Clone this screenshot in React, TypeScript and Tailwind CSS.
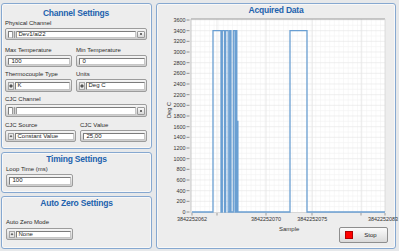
import React from 'react';

const font = { fontFamily: '"Liberation Sans", Arial, sans-serif' };

const Panel: React.FC<{ title: string; className?: string; children?: React.ReactNode }> = ({ title, className, children }) => (
  <div className={`rounded-[3px] border border-[#86a8d0] bg-[#ededed] shadow-[inset_0_0_0_1px_#f8f8f8] ${className || ''}`}>
    <div className="h-[13px] text-center text-[8.5px] font-bold leading-[13px] tracking-[-0.2px] text-[#2262ad]">{title}</div>
    {children}
  </div>
);

const Label: React.FC<{ text: string }> = ({ text }) => (
  <div className="h-[7px] whitespace-nowrap text-[6px] leading-[7px] text-[#2a2a2a]">{text}</div>
);

const Frame: React.FC<{ className?: string; children?: React.ReactNode }> = ({ className, children }) => (
  <div className={`flex rounded-[2px] border border-[#9c9c9c] bg-gradient-to-b from-[#f6f6f6] to-[#cdcdcd] p-[1.5px] ${className || ''}`}>
    {children}
  </div>
);

const TextField: React.FC<{ value: string; h?: string }> = ({ value, h = 'h-[12px]' }) => (
  <Frame className={h}>
    <div className="flex flex-1 items-center border border-[#c6c6c6] border-l-[#7c7c7c] border-t-[#7c7c7c] bg-white pl-[3px] text-[6px] text-[#222]">
      {value}
    </div>
  </Frame>
);

const Spinner: React.FC = () => (
  <div className="mr-[1px] flex w-[6px] flex-col justify-between border border-[#a4a4a4] bg-[#e8e8e8] py-[1px]">
    <svg viewBox="0 0 6 3" className="h-[3px] w-[4px] self-center">
      <path d="M0 3 L3 0 L6 3 Z" fill="#555" />
    </svg>
    <svg viewBox="0 0 6 3" className="h-[3px] w-[4px] self-center">
      <path d="M0 0 L3 3 L6 0 Z" fill="#555" />
    </svg>
  </div>
);

const RingField: React.FC<{ value: string; h?: string }> = ({ value, h = 'h-[13px]' }) => (
  <Frame className={h}>
    <Spinner />
    <div className="flex flex-1 items-center border border-[#c6c6c6] border-l-[#7c7c7c] border-t-[#7c7c7c] bg-white pl-[2px] text-[6px] text-[#222]">
      {value}
    </div>
  </Frame>
);

const IOField: React.FC<{ value: string; h?: string }> = ({ value, h = 'h-[12px]' }) => (
  <Frame className={h}>
    <div className="flex flex-1 items-center border border-[#c6c6c6] border-l-[#7c7c7c] border-t-[#7c7c7c] bg-white pl-[3px] text-[6px] text-[#222]">
      <div className="mr-[2px] h-[7px] w-[5px] bg-[repeating-linear-gradient(90deg,#9a9a9a_0px,#9a9a9a_1px,#d4d4d4_1px,#d4d4d4_2px)]" />
      {value}
    </div>
    <div className="ml-[1px] flex w-[8px] items-center justify-center rounded-[1px] border border-[#9a9a9a] bg-gradient-to-b from-[#fafafa] to-[#d8d8d8]">
      <div className="h-[2px] w-[2px] rounded-full bg-[#444]" />
    </div>
  </Frame>
);

// chart coordinates are page pixels
const PL = 192;
const PR = 386;
const PT = 19;
const PB = 212;
const yOf = (v: number) => PB - (v * 192) / 3600;
const xOf = (s: number) => 193 + (s - 62) * 9.25;

const hi = yOf(3400).toFixed(2);
const dataPath =
  `M193,${PB} H214 V${hi} H222 V${PB} H223.3 V${hi} H225.5 V${PB} H226.7 V${hi} H229.2 V${PB} H230.7 V${hi} H232 V${PB} H234.3 V${hi} H236 V${PB} H237.2 V${hi} H237.8 V${PB} H238.3 V${yOf(1700)} H238.9 V${PB} H291 V${hi} H308 V${PB} H${PR}`;

const Chart: React.FC = () => {
  const yTicks = Array.from({ length: 19 }, (_, i) => i * 200);
  const minorY = Array.from({ length: 36 }, (_, i) => i * 100 + 100);
  const minorX: number[] = [];
  for (let x = PL + 4.6; x < PR; x += 4.625) minorX.push(x);
  const xLabels = [62, 70, 75, 83];
  return (
    <svg width={238} height={209} viewBox="158 17 238 209" className="block overflow-visible">
      <rect x={PL} y={PT} width={PR - PL} height={PB - PT} fill="#ffffff" />
      {minorX.map((x, i) => (
        <line key={'mx' + i} x1={x} x2={x} y1={PT} y2={PB} stroke="#f1f1f1" strokeWidth={0.6} />
      ))}
      {minorY.map((v) => (
        <line key={'my' + v} x1={PL} x2={PR} y1={yOf(v)} y2={yOf(v)} stroke={v % 200 === 0 ? '#e6e6e6' : '#f2f2f2'} strokeWidth={0.6} />
      ))}
      {[xOf(64.7), xOf(70), xOf(75), xOf(80.3)].map((x, i) => (
        <line key={'gx' + i} x1={x} x2={x} y1={PT} y2={PB} stroke="#e4e4e4" strokeWidth={0.8} />
      ))}
      <line x1={PL} x2={PR} y1={PT} y2={PT} stroke="#9c9c9c" strokeWidth={1.2} />
      <line x1={PR} x2={PR} y1={PT} y2={PB} stroke="#d6d6d6" strokeWidth={0.8} />
      <line x1={PL} x2={PL} y1={PT} y2={PB + 1} stroke="#bdbdbd" strokeWidth={0.8} />
      <line x1={PL} x2={PR} y1={PB + 0.5} y2={PB + 0.5} stroke="#d0d0d0" strokeWidth={0.8} />
      <path d={dataPath} fill="none" stroke="#6a9fd2" strokeWidth={1.3} strokeLinejoin="miter" />
      {yTicks.map((v) => (
        <g key={'yt' + v}>
          <line x1={187.5} x2={190.5} y1={yOf(v)} y2={yOf(v)} stroke="#555" strokeWidth={0.6} />
          <text x={186.5} y={yOf(v) + 1.9} textAnchor="end" fontSize={5.4} fill="#333" style={font}>
            {v}
          </text>
        </g>
      ))}
      {[193, 218, 267, 313, 362, 386].map((x) => (
        <line key={'xt' + x} x1={x} x2={x} y1={PB + 1} y2={PB + 3.5} stroke="#666" strokeWidth={0.6} />
      ))}
      {xLabels.map((s) => (
        <text key={'xl' + s} x={s === 83 ? 384 : xOf(s)} y={220.5} textAnchor="middle" fontSize={5.4} fill="#333" style={font}>
          {`38422520${s}`}
        </text>
      ))}
      <text x={0} y={0} transform="translate(172 110) rotate(-90)" textAnchor="middle" fontSize={5.6} fill="#333" style={font}>
        Deg C
      </text>
    </svg>
  );
};

export default function App() {
  return (
    <div className="flex h-[251px] w-[399px] gap-[4px] overflow-hidden bg-[#e6e8ea] pl-[1px] pr-[3px] pt-[3px]" style={font}>
      <div className="flex w-[152px] flex-col gap-[3px]">
        <Panel title="Channel Settings" className="h-[146px] px-[3px] pr-[4px] pt-[3px]">
          <Label text="Physical Channel" />
          <div className="mt-[1px]">
            <IOField value="Dev1/ai22" />
          </div>
          <div className="mt-[7px] flex justify-between">
            <div className="w-[67px]">
              <Label text="Max Temperature" />
              <div className="mt-[1px]"><TextField value="100" /></div>
            </div>
            <div className="w-[71px]">
              <Label text="Min Temperature" />
              <div className="mt-[1px]"><TextField value="0" /></div>
            </div>
          </div>
          <div className="mt-[4px] flex justify-between">
            <div className="w-[67px]">
              <Label text="Thermocouple Type" />
              <div className="mt-[1px]"><RingField value="K" /></div>
            </div>
            <div className="w-[71px]">
              <Label text="Units" />
              <div className="mt-[1px]"><RingField value="Deg C" /></div>
            </div>
          </div>
          <div className="mt-[4px]">
            <Label text="CJC Channel" />
            <div className="mt-[1px]">
              <IOField value="" h="h-[13px]" />
            </div>
          </div>
          <div className="mt-[5px] flex justify-between">
            <div className="w-[71px]">
              <Label text="CJC Source" />
              <div className="mt-[1px]"><RingField value="Constant Value" h="h-[12px]" /></div>
            </div>
            <div className="w-[67px]">
              <Label text="CJC Value" />
              <div className="mt-[1px]"><TextField value="25,00" /></div>
            </div>
          </div>
        </Panel>
        <Panel title="Timing Settings" className="h-[41px] px-[4px]">
          <Label text="Loop Time (ms)" />
          <div className="mt-[1px] w-[67px]">
            <TextField value="100" h="h-[13px]" />
          </div>
        </Panel>
        <Panel title="Auto Zero Settings" className="h-[53px] px-[4px]">
          <div className="mt-[9px]">
            <Label text="Auto Zero Mode" />
          </div>
          <div className="mt-[2px] w-[67px]">
            <RingField value="None" h="h-[12px]" />
          </div>
        </Panel>
      </div>
      <div className="h-[246px] flex-1 rounded-[3px] border border-[#86a8d0] bg-[#ededed] shadow-[inset_0_0_0_1px_#f8f8f8]">
        <div className="h-[13px] text-center text-[8.5px] font-bold leading-[13px] tracking-[-0.2px] text-[#2262ad]">Acquired Data</div>
        <Chart />
        <div className="flex items-start">
          <div className="ml-[122px] text-[6px] leading-[7px] text-[#333]">Sample</div>
          <div className="ml-[40px] mt-[1px] flex h-[16px] w-[49px] items-center rounded-[2px] border border-[#8e8e8e] bg-gradient-to-b from-[#fbfbfb] to-[#d9d9d9] pl-[5px]">
            <div className="h-[8px] w-[8px] border border-[#b00000] bg-[#ff0000]" />
            <div className="ml-[11px] text-[6px] text-[#222]">Stop</div>
          </div>
        </div>
      </div>
    </div>
  );
}
